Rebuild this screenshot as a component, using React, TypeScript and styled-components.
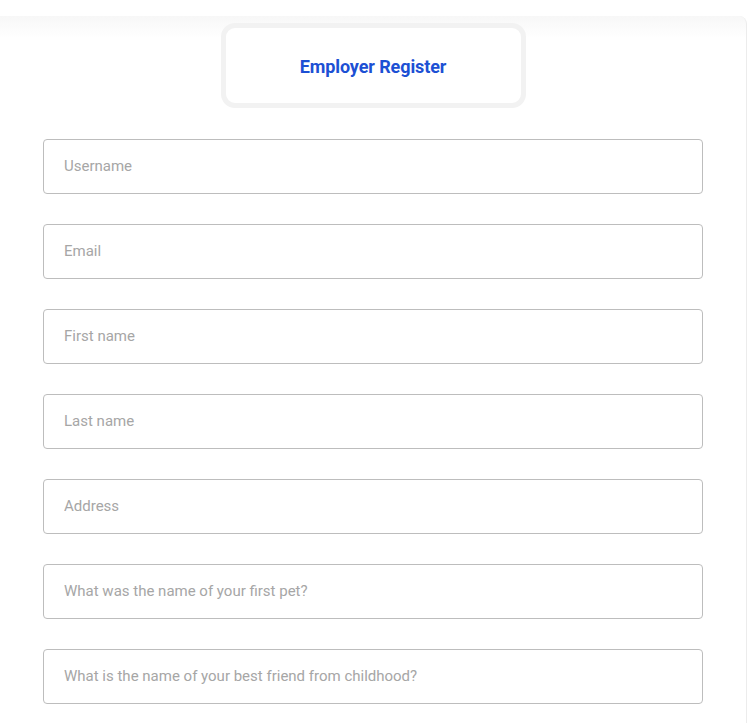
import styled, { createGlobalStyle } from 'styled-components'

const GlobalStyle = createGlobalStyle`
  body {
    margin: 0;
    background: #ffffff;
    font-family: Roboto, "Liberation Sans", sans-serif;
  }
  input::placeholder {
    color: #a6a6a6;
    opacity: 1;
  }
`

const Page = styled.div`
  padding-top: 16px;
  width: 750px;
`

const Card = styled.div`
  width: 747px;
  min-height: 707px;
  background: linear-gradient(180deg, #f7f7f7 0px, #ffffff 22px);
  border-right: 1px solid #ececec;
  border-top-right-radius: 8px;
  display: flex;
  flex-direction: column;
  align-items: center;
  padding-top: 7px;
  box-sizing: border-box;
`

const TitleBox = styled.div`
  width: 305px;
  height: 85px;
  box-sizing: border-box;
  border: 5px solid #f2f2f2;
  border-radius: 14px;
  background: #ffffff;
  display: flex;
  align-items: center;
  justify-content: center;
  padding-top: 1px;
`

const Title = styled.h2`
  margin: 0;
  font-family: Roboto, "Liberation Sans", sans-serif;
  font-weight: 700;
  font-size: 18px;
  letter-spacing: -0.1px;
  color: #1c50d4;
`

const Form = styled.form`
  margin-top: 31px;
  width: 660px;
  display: flex;
  flex-direction: column;
  gap: 30px;
`

const Field = styled.input`
  height: 55px;
  box-sizing: border-box;
  border: 1px solid #bdbdbd;
  border-radius: 4px;
  padding: 0 20px 2px;
  font-family: Roboto, "Liberation Sans", sans-serif;
  font-size: 15px;
  color: #333;
  background: #fff;
  outline: none;
`

const fields = [
  'Username',
  'Email',
  'First name',
  'Last name',
  'Address',
  'What was the name of your first pet?',
  'What is the name of your best friend from childhood?',
]

const App = () => {
  return (
    <Page>
      <GlobalStyle />
      <Card>
        <TitleBox>
          <Title>Employer Register</Title>
        </TitleBox>
        <Form>
          {fields.map((f) => (
            <Field key={f} placeholder={f} />
          ))}
        </Form>
      </Card>
    </Page>
  )
}

export default App
